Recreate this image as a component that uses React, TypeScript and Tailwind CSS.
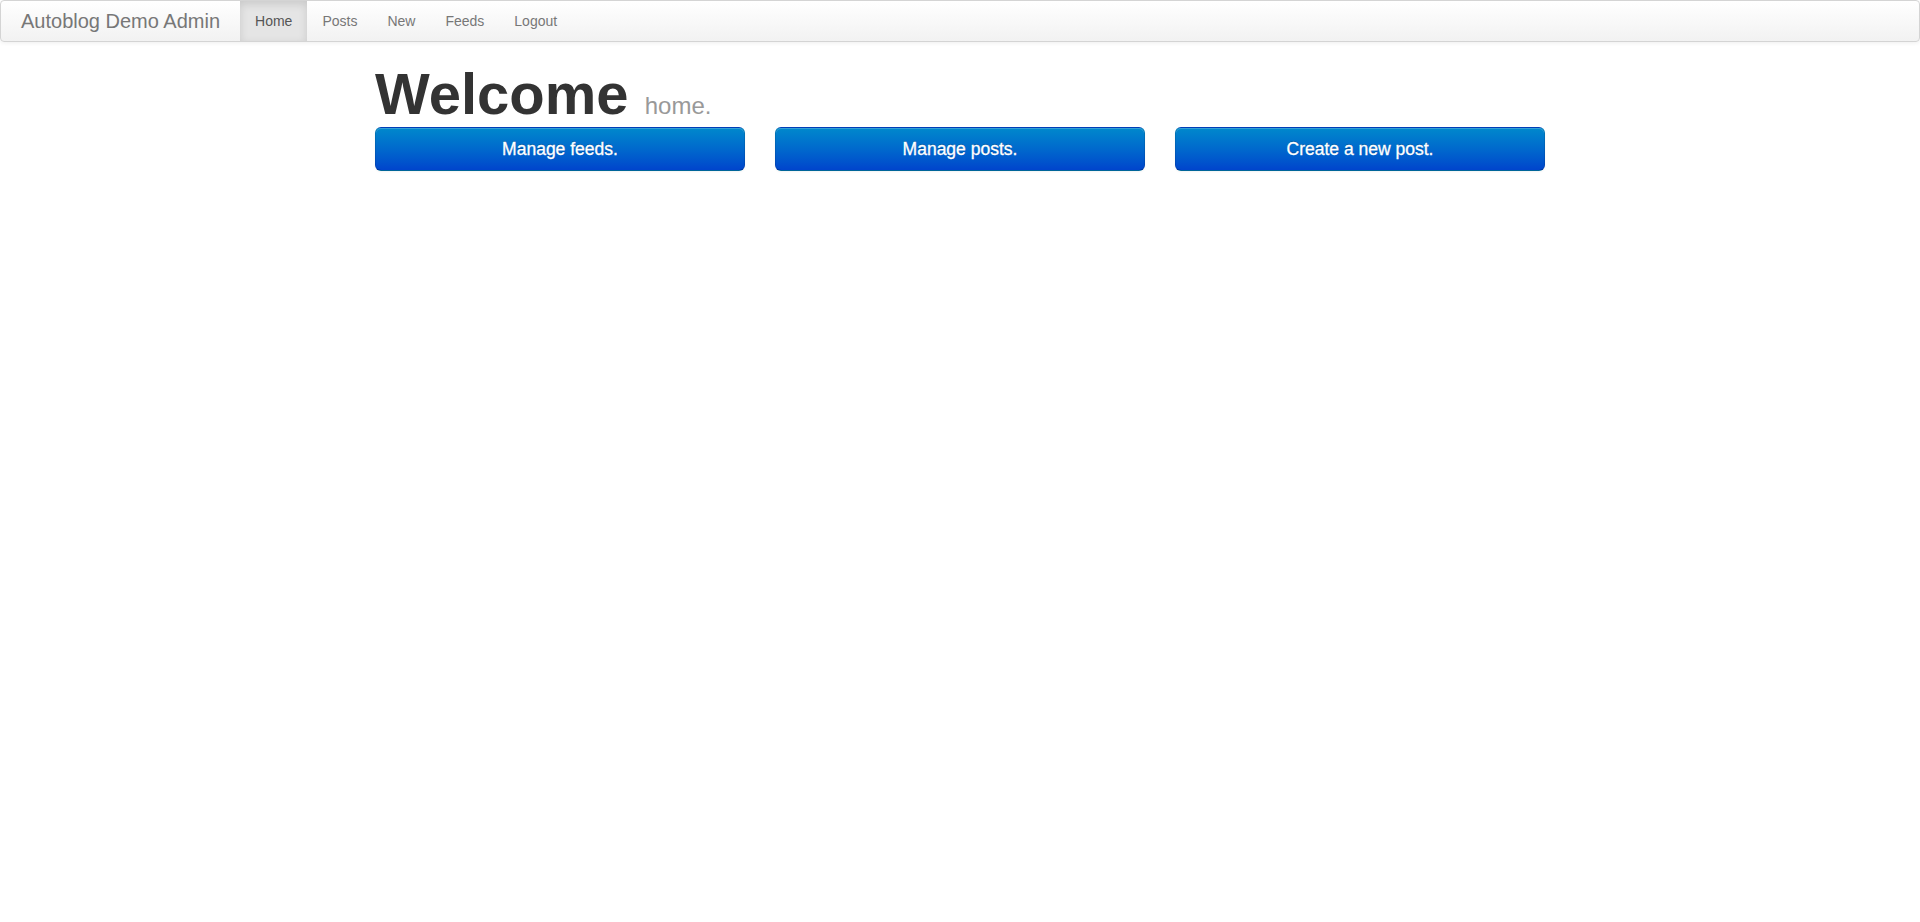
const navLinks = [
  { label: "Home", active: true },
  { label: "Posts", active: false },
  { label: "New", active: false },
  { label: "Feeds", active: false },
  { label: "Logout", active: false },
];

const actions = ["Manage feeds.", "Manage posts.", "Create a new post."];

function Navbar() {
  return (
    <div className="flex h-[42px] items-stretch rounded-[4px] border border-[#d4d4d4] bg-gradient-to-b from-white to-[#f2f2f2] shadow-[0_1px_4px_rgba(0,0,0,0.065)]">
      <a className="flex items-center px-5 text-[20px] font-light leading-5 text-[#777]">
        Autoblog Demo Admin
      </a>
      <ul className="flex items-stretch">
        {navLinks.map((link) => (
          <li key={link.label} className="flex">
            <a
              className={
                link.active
                  ? "flex items-center bg-[#e5e5e5] px-[15px] text-[14px] leading-5 text-[#555] shadow-[inset_0_3px_8px_rgba(0,0,0,0.125)]"
                  : "flex items-center px-[15px] text-[14px] leading-5 text-[#777]"
              }
            >
              {link.label}
            </a>
          </li>
        ))}
      </ul>
    </div>
  );
}

function ActionButton({ label }: { label: string }) {
  return (
    <a className="flex h-[44px] items-center justify-center rounded-[6px] border border-[rgba(0,0,0,0.1)] border-b-[rgba(0,0,0,0.25)] bg-gradient-to-b from-[#0088cc] to-[#0044cc] text-[17.5px] leading-5 text-white shadow-[inset_0_1px_0_rgba(255,255,255,0.2),0_1px_2px_rgba(0,0,0,0.05)] [text-shadow:0_-1px_0_rgba(0,0,0,0.25)] [-webkit-text-stroke:0.3px_white]">
      {label}
    </a>
  );
}

export default function App() {
  return (
    <div className="min-h-[922px] bg-white font-['Liberation_Sans',Arial,sans-serif] text-[#333]">
      <Navbar />
      <div className="mx-auto w-[1170px]">
        <h1 className="mt-[22px] mb-[3px] text-[58px] font-bold leading-[60px] text-[#333]">
          Welcome{" "}
          <small className="text-[24px] font-normal leading-none text-[#999]">home.</small>
        </h1>
        <div className="grid grid-cols-3 gap-[30px]">
          {actions.map((label) => (
            <ActionButton key={label} label={label} />
          ))}
        </div>
      </div>
    </div>
  );
}
